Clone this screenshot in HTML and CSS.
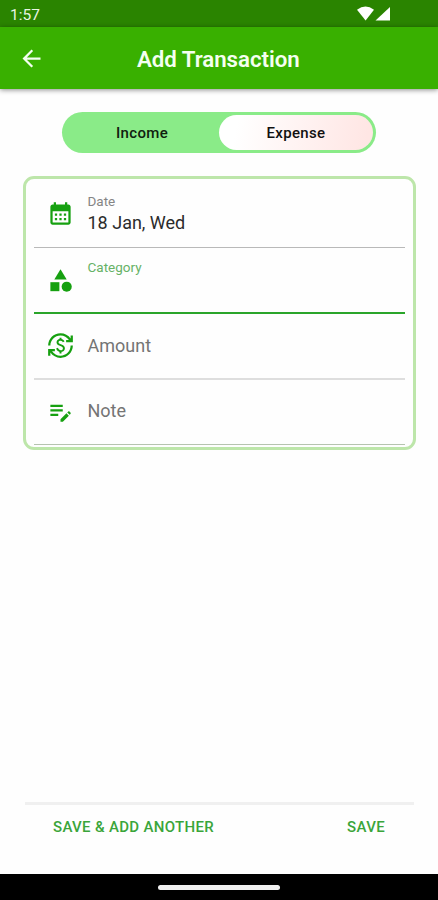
FILE: index.html
```html
<!DOCTYPE html>
<html lang="en">
<head>
<meta charset="utf-8">
<title>Add Transaction</title>
<link rel="stylesheet" href="styles.css">
</head>
<body>
<div class="screen">
  <div class="status">
    <span class="clock">1:57</span>
    <svg class="signals" viewBox="0 0 34 16"><path d="M0 3.8Q8.500-2.800 17 3.800L8.600 14.600z"/><path d="M18.500 14.600L33 1V14.600z"/></svg>
  </div>
  <header class="bar">
    <svg class="back" viewBox="0 0 24 24"><path d="M20 11H7.830l5.590-5.590L12 4l-8 8 8 8 1.410-1.410L7.830 13H20v-2z"/></svg>
    <h1 class="title">Add Transaction</h1>
  </header>
  <main class="content">
    <div class="toggle">
      <div class="option income"><span>Income</span></div>
      <div class="option expense"><span>Expense</span></div>
    </div>
    <section class="card">
      <div class="field date">
        <svg class="icon" viewBox="0 0 24 24"><path d="M19 4h-1V2h-2v2H8V2H6v2H5c-1.110 0-1.990.9-1.990 2L3 20c0 1.100.89 2 2 2h14c1.100 0 2-.9 2-2V6c0-1.100-.9-2-2-2zm0 16H5V10h14v10zM9 14H7v-2h2v2zm4 0h-2v-2h2v2zm4 0h-2v-2h2v2zm-8 4H7v-2h2v2zm4 0h-2v-2h2v2zm4 0h-2v-2h2v2z"/></svg>
        <div class="stack"><span class="label">Date</span><span class="value">18 Jan, Wed</span></div>
      </div>
      <div class="field category">
        <svg class="icon" viewBox="0 0 24 24"><path d="M12 2l-5.500 9h11z"/><circle cx="17.500" cy="17.500" r="4.500"/><path d="M3 13.500h8v8H3z"/></svg>
        <div class="stack"><span class="label">Category</span></div>
      </div>
      <div class="field amount">
        <svg class="icon" viewBox="0 0 24 24"><path d="M12.890 11.100c-1.780-.59-2.640-.96-2.640-1.900 0-1.020 1.110-1.390 1.810-1.390 1.310 0 1.790.99 1.900 1.340l1.580-.67c-.15-.44-.82-1.910-2.660-2.230V5h-1.750v1.260c-2.600.56-2.620 2.850-2.620 2.960 0 2.270 2.250 2.910 3.350 3.310 1.580.56 2.280 1.070 2.280 2.030 0 1.130-1.050 1.610-1.980 1.610-1.820 0-2.340-1.870-2.400-2.090l-1.660.67c.63 2.190 2.280 2.780 3.020 2.960V19h1.750v-1.240c.52-.09 3.020-.59 3.020-3.220.01-1.390-.6-2.610-3-3.440zM3 21H1v-6h6v2H4.520c1.610 2.410 4.360 4 7.480 4 4.970 0 9-4.030 9-9h2c0 6.080-4.920 11-11 11-3.720 0-7.010-1.850-9-4.670V21zm-2-9C1 5.920 5.920 1 12 1c3.720 0 7.010 1.850 9 4.670V3h2v6h-6V7h2.480C17.870 4.590 15.120 3 12 3c-4.970 0-9 4.030-9 9H1z"/></svg>
        <span class="placeholder">Amount</span>
      </div>
      <div class="field note">
        <svg class="icon" viewBox="0 0 24 24"><path d="M3 10h11v2H3v-2zm0-2h11V6H3v2zm0 8h7v-2H3v2zm15.010-3.130.71-.71c.39-.39 1.020-.39 1.410 0l.71.71c.39.39.39 1.020 0 1.410l-.71.71-2.120-2.120zm-.71.71-5.300 5.300V21h2.120l5.300-5.300-2.120-2.120z"/></svg>
        <span class="placeholder">Note</span>
      </div>
    </section>
  </main>
  <footer class="actions">
    <span>SAVE &amp; ADD ANOTHER</span>
    <span>SAVE</span>
  </footer>
  <div class="navbar"><div class="handle"></div></div>
</div>
</body>
</html>
```
FILE: styles.css
```css
* { box-sizing: border-box; }
body { margin: 0; background: #fff; font-family: Roboto, "Liberation Sans", sans-serif; }
.screen { width: 438px; height: 900px; display: flex; flex-direction: column; overflow: hidden; background: #fefefe; }
.status { height: 27px; flex: none; background: #2a8400; display: flex; align-items: center; justify-content: space-between; padding: 2px 47px 0 10px; }
.clock { color: #e9f5e4; font-size: 15.500px; line-height: 20px; }
.signals { width: 34px; height: 16px; margin-bottom: 1px; fill: #fff; }
.bar { height: 62px; flex: none; background: #39b000; display: flex; align-items: center; padding: 1px 0 0 18px; box-shadow: 0 1px 5px rgba(0, 0, 0, .45); }
.back { width: 27px; height: 27px; fill: #f4fff0; }
.title { margin: 0 0 0 92px; color: #f4fff0; font-size: 22.300px; font-weight: 600; line-height: 28px; letter-spacing: -.05px; white-space: nowrap; }
.content { flex: 1; display: flex; flex-direction: column; align-items: flex-start; padding: 23px 0 0 23px; }
.toggle { width: 314px; height: 41px; margin-left: 39px; display: flex; padding: 3px; border-radius: 21px; background: #8aeb88; }
.option { display: flex; align-items: center; justify-content: center; font-size: 15px; font-weight: 500; letter-spacing: .35px; color: #10200f; border-radius: 18px; }
.income { width: 154px; }
.expense { width: 154px; color: #111; background: linear-gradient(100deg, #fff 12%, #ffe6e4 95%); }
.card { width: 393px; height: 274px; margin-top: 23px; padding: 0 8px; border: 3px solid #bde6aa; border-radius: 11px; }
.field { display: flex; align-items: center; padding-left: 13px; gap: 13.500px; }
.date { height: 69px; padding-top: 1px; border-bottom: 1px solid #b9b9b9; }
.category { height: 66px; border-bottom: 2px solid #2aa52a; }
.amount { height: 66px; padding-bottom: 1px; border-bottom: 2px solid #dedede; }
.note { height: 65px; padding-bottom: 2px; border-bottom: 1px solid #b5c4af; }
.icon { width: 27px; height: 27px; fill: #16a010; flex: none; }
.stack { display: flex; flex-direction: column; height: 46px; }
.label { font-size: 13.500px; line-height: 20px; color: #858585; }
.category .label { color: #66b266; }
.value { font-size: 18px; line-height: 24px; color: #2b2b2b; }
.placeholder { font-size: 18px; line-height: 24px; color: #747474; }
.actions { flex: none; height: 72px; margin: 0 24px 0 25px; border-top: 3px solid #f0f0f0; display: flex; justify-content: space-between; padding: 12px 29px 0 28px; font-size: 15px; font-weight: 500; letter-spacing: .33px; line-height: 20px; color: #3aa53a; white-space: nowrap; }
.navbar { height: 26px; flex: none; background: #000; display: flex; justify-content: center; padding-top: 11px; }
.handle { width: 122px; height: 5px; border-radius: 3px; background: #f0f0f0; }
```
